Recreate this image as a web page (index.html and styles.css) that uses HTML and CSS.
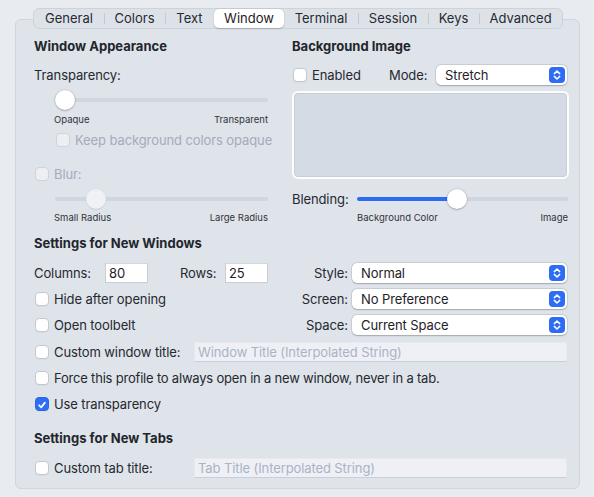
FILE: index.html
```html
<!DOCTYPE html>
<html>
<head>
<meta charset="utf-8">
<link rel="stylesheet" href="styles.css">
</head>
<body>
<div class="page">
  <div class="panel">
    <div class="tabbar">
      <div class="tab">General</div>
      <div class="tab sep">Colors</div>
      <div class="tab sep">Text</div>
      <div class="tab selected">Window</div>
      <div class="tab">Terminal</div>
      <div class="tab sep">Session</div>
      <div class="tab sep">Keys</div>
      <div class="tab sep">Advanced</div>
    </div>

    <div class="content">
      <div class="top">
        <div class="col-left">
          <div class="heading">Window Appearance</div>
          <div class="label-row transp">Transparency:</div>
          <div class="slider indent">
            <span class="thumb"></span>
            <span class="track rest"></span>
          </div>
          <div class="slider-labels indent-l"><span>Opaque</span><span>Transparent</span></div>
          <div class="check-row indent keep disabled"><span class="cb cb-disabled"></span><span>Keep background colors opaque</span></div>
          <div class="check-row blur disabled"><span class="cb cb-disabled"></span><span>Blur:</span></div>
          <div class="slider indent blur-slider">
            <span class="track pre" style="width:33px"></span>
            <span class="thumb thumb-disabled"></span>
            <span class="track rest"></span>
          </div>
          <div class="slider-labels indent-l tight"><span>Small Radius</span><span>Large Radius</span></div>
        </div>

        <div class="col-right">
          <div class="heading">Background Image</div>
          <div class="enabled-row">
            <span class="cb"></span><span class="enabled-text">Enabled</span>
            <span class="mode-text">Mode:</span>
            <div class="popup mode-popup"><span class="popup-text">Stretch</span><span class="chev"><svg viewBox="0 0 16 16" width="16" height="16"><path d="M5.3 6.6 L8 4 L10.7 6.6 M5.3 9.4 L8 12 L10.7 9.4" fill="none" stroke="#fff" stroke-width="1.5" stroke-linecap="round" stroke-linejoin="round"/></svg></span></div>
          </div>
          <div class="well"></div>
          <div class="blend-row">
            <span class="blend-label">Blending:</span>
            <div class="slider blend-slider">
              <span class="track fill" style="width:92px"></span>
              <span class="thumb"></span>
              <span class="track rest"></span>
            </div>
          </div>
          <div class="slider-labels blend-labels tight"><span>Background Color</span><span>Image</span></div>
        </div>
      </div>

      <div class="heading new-windows">Settings for New Windows</div>

      <div class="win-grid">
        <div class="size-row">
          <span class="size-label col-label">Columns:</span>
          <span class="field size-field">80</span>
          <span class="size-label rows-label">Rows:</span>
          <span class="field size-field">25</span>
        </div>
        <span class="popup-label">Style:</span>
        <div class="popup"><span class="popup-text">Normal</span><span class="chev"><svg viewBox="0 0 16 16" width="16" height="16"><path d="M5.3 6.6 L8 4 L10.7 6.6 M5.3 9.4 L8 12 L10.7 9.4" fill="none" stroke="#fff" stroke-width="1.5" stroke-linecap="round" stroke-linejoin="round"/></svg></span></div>

        <div class="check-row"><span class="cb"></span><span>Hide after opening</span></div>
        <span class="popup-label">Screen:</span>
        <div class="popup"><span class="popup-text">No Preference</span><span class="chev"><svg viewBox="0 0 16 16" width="16" height="16"><path d="M5.3 6.6 L8 4 L10.7 6.6 M5.3 9.4 L8 12 L10.7 9.4" fill="none" stroke="#fff" stroke-width="1.5" stroke-linecap="round" stroke-linejoin="round"/></svg></span></div>

        <div class="check-row"><span class="cb"></span><span>Open toolbelt</span></div>
        <span class="popup-label">Space:</span>
        <div class="popup"><span class="popup-text">Current Space</span><span class="chev"><svg viewBox="0 0 16 16" width="16" height="16"><path d="M5.3 6.6 L8 4 L10.7 6.6 M5.3 9.4 L8 12 L10.7 9.4" fill="none" stroke="#fff" stroke-width="1.5" stroke-linecap="round" stroke-linejoin="round"/></svg></span></div>
      </div>

      <div class="check-row title-row"><span class="cb"></span><span class="title-label">Custom window title:</span><span class="field placeholder">Window Title (Interpolated String)</span></div>
      <div class="check-row gap6"><span class="cb"></span><span class="long">Force this profile to always open in a new window, never in a tab.</span></div>
      <div class="check-row gap6"><span class="cb cb-checked"><svg viewBox="0 0 14 14" width="14" height="14"><path d="M3.6 7.3 L6 9.8 L10.4 4.2" fill="none" stroke="#fff" stroke-width="2" stroke-linecap="round" stroke-linejoin="round"/></svg></span><span>Use transparency</span></div>

      <div class="heading new-tabs">Settings for New Tabs</div>
      <div class="check-row tab-title-row"><span class="cb"></span><span class="title-label">Custom tab title:</span><span class="field placeholder">Tab Title (Interpolated String)</span></div>
    </div>
  </div>
</div>
</body>
</html>
```

FILE: styles.css
```css
* { box-sizing: border-box; }
html, body { margin: 0; padding: 0; }
body {
  width: 594px;
  height: 497px;
  overflow: hidden;
  background: #e8ebef;
  font-family: Inter, "Noto Sans", sans-serif;
  font-size: 13px;
  letter-spacing: -0.1px;
  color: #25292f;
  white-space: nowrap;
}
.page { padding: 19px 14px 0 15px; }
.panel {
  height: 470px;
  background: #dfe3ea;
  border: 1px solid #d1d6de;
  border-radius: 6px;
}
.tabbar {
  margin: -12px 0 0 17px;
  width: 530px;
  height: 21px;
  display: grid;
  grid-template-columns: 70px 61px 49px 70px 74px 70px 51px 83px;
  background: #dde2e9;
  border: 1px solid #cdd3dc;
  border-radius: 6px;
  letter-spacing: 0;
}
.tab {
  height: 19px;
  line-height: 19px;
  text-align: center;
  color: #262a31;
}
.tab.sep {
  background: linear-gradient(#c3c9d3, #c3c9d3) left center / 1px 11px no-repeat;
}
.tab.selected {
  background: #fff;
  border-radius: 5px;
  box-shadow: 0 0.5px 1.5px rgba(0,0,0,0.22);
  color: #1d2026;
}
.content { padding: 0 10px 0 18px; }
.top {
  display: grid;
  grid-template-columns: 240px 277px;
  column-gap: 18px;
}
.heading {
  height: 20px;
  line-height: 20px;
  font-weight: 700;
  letter-spacing: 0;
  margin-top: 7px;
  color: #22262c;
}
.label-row { height: 20px; line-height: 20px; }
.transp { margin-top: 9px; }
.indent { margin-left: 21px; }
.indent-l { margin-left: 20px; }
.slider {
  height: 20px;
  width: 213px;
  margin-top: 5px;
  display: flex;
  align-items: center;
}
.track {
  height: 4px;
  border-radius: 2px;
  background: #d0d6df;
  display: block;
}
.track.pre { border-radius: 2px 0 0 2px; margin-right: -2px; }
.track.rest { flex: 1; margin-left: -2px; }
.track.fill { background: #2b6cf3; margin-right: -2px; }
.thumb {
  width: 20px;
  height: 20px;
  border-radius: 50%;
  background: #fff;
  box-shadow: 0 0.5px 2px rgba(0,0,0,0.32), 0 0 0 0.5px rgba(0,0,0,0.06);
  position: relative;
  z-index: 1;
  flex: none;
}
.thumb-disabled { background: #eff1f5; box-shadow: 0 0.5px 1.5px rgba(0,0,0,0.15); }
.slider-labels {
  width: 214px;
  height: 12px;
  line-height: 12px;
  margin-top: 4px;
  display: flex;
  justify-content: space-between;
  font-size: 9.5px;
  letter-spacing: 0;
  color: #30343b;
}
.slider-labels.tight { margin-top: 3px; }
.check-row {
  height: 20px;
  display: flex;
  align-items: center;
}
.cb {
  width: 14px;
  height: 14px;
  margin-left: 1px;
  margin-right: 5px;
  flex: none;
  background: #fff;
  border: 1px solid #c3c8d1;
  border-radius: 4px;
  box-shadow: 0 0.5px 0.5px rgba(0,0,0,0.06);
  display: flex;
}
.cb-disabled { background: #edeff3; border-color: #cfd4dc; box-shadow: none; }
.cb-checked { background: #2e6ef5; border-color: #2a66e6; }
.disabled { color: #a4acbc; }
.keep { margin-top: 4px; }
.blur { margin-top: 14px; }
.blur-slider { margin-top: 5px; }

.enabled-row {
  height: 20px;
  margin-top: 9px;
  display: flex;
  align-items: center;
}
.enabled-text { width: 77px; }
.mode-text { width: 47px; }
.popup {
  height: 20px;
  flex: 1;
  margin-right: 2px;
  background: #fff;
  border-radius: 5px;
  box-shadow: 0 0 0 0.5px rgba(0,0,0,0.12), 0 0.5px 1.5px rgba(0,0,0,0.22);
  display: flex;
  align-items: center;
  padding: 0 2px 0 9px;
}
.popup-text { flex: 1; color: #1f2228; }
.chev {
  width: 16px;
  height: 16px;
  border-radius: 4px;
  background: #2d6df5;
  display: flex;
}
.well {
  margin-top: 6px;
  height: 88px;
  background: #d4dbe5;
  border: 2px solid #fdfdfe;
  border-radius: 6px;
  box-shadow: inset 0 0 0 1px #c7ced8;
}
.blend-row {
  height: 20px;
  margin-top: 10px;
  display: flex;
  align-items: center;
}
.blend-label { width: 65px; }
.blend-slider { width: 211px; margin-top: 0; }
.blend-labels { margin-left: 65px; width: 211px; }

.new-windows { margin-top: 9px; }
.win-grid {
  margin-top: 10px;
  margin-right: 2px;
  display: grid;
  grid-template-columns: 1fr auto 215px;
  grid-auto-rows: 20px;
  column-gap: 4px;
  row-gap: 6px;
  align-items: center;
}
.win-grid .popup { margin-right: 0; }
.popup-label { text-align: right; }
.size-row { display: flex; align-items: center; height: 20px; }
.col-label { width: 71px; }
.rows-label { width: 45px; margin-left: 32px; }
.field {
  height: 20px;
  background: #fff;
  border: 1px solid #c9ced7;
  border-top-color: #d3d7de;
  line-height: 18px;
  padding-left: 3px;
}
.size-field { width: 43px; color: #1f2228; }
.title-row { margin-top: 7px; }
.title-label { width: 140px; }
.placeholder {
  flex: 1;
  margin-right: 2px;
  background: #eff0f5;
  border: 1px solid #e7e9ef;
  border-bottom-color: #c9cfda;
  color: #aab3c6;
}
.long { letter-spacing: -0.2px; }
.gap6 { margin-top: 6px; }
.new-tabs { margin-top: 14px; }
.tab-title-row { margin-top: 10px; }
```
